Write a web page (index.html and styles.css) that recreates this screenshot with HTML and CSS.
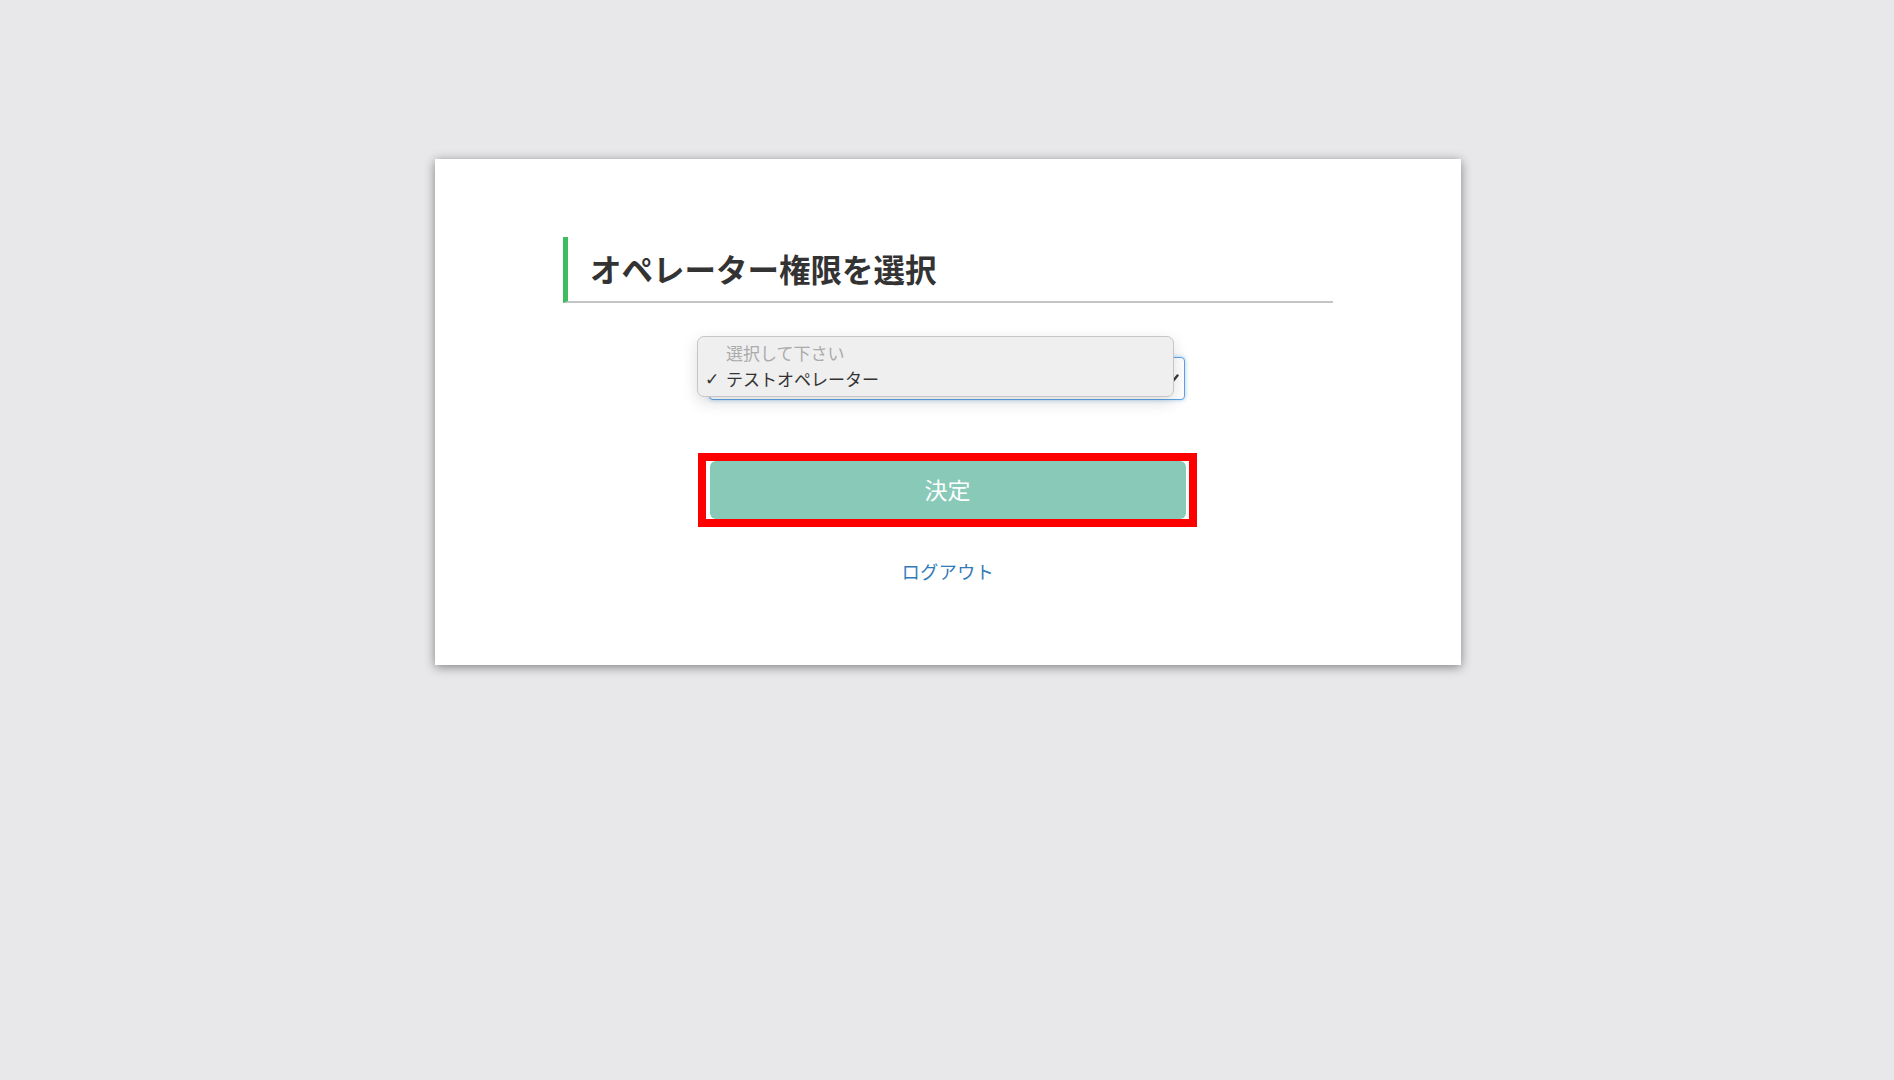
FILE: index.html
```html
<!DOCTYPE html>
<html lang="ja">
<head>
  <meta charset="UTF-8">
  <meta name="viewport" content="width=device-width, initial-scale=1.0">
  <title>オペレーター権限を選択</title>
  <link rel="stylesheet" href="styles.css">
</head>
<body>
  <div class="card">
    <h1 class="page-title">オペレーター権限を選択</h1>

    <div class="select-wrap">
      <div class="select-box">
        <span class="select-value">テストオペレーター</span>
        <svg class="select-arrow" width="12" height="9" viewBox="0 0 12 9">
          <path d="M1.5 1.5 L6 7 L10.5 1.5" fill="none" stroke="#3a3a3a" stroke-width="2.4" stroke-linecap="round" stroke-linejoin="round"/>
        </svg>
      </div>
      <!-- open native popup -->
      <ul class="select-menu">
        <li class="option placeholder"><span class="check"></span>選択して下さい</li>
        <li class="option selected"><span class="check">✓</span>テストオペレーター</li>
      </ul>
    </div>

    <div class="highlight">
      <button class="submit-btn" type="button">決定</button>
    </div>

    <a class="logout" href="#">ログアウト</a>
  </div>
</body>
</html>
```

FILE: styles.css
```css
* {
  box-sizing: border-box;
}

body {
  margin: 0;
  background-color: #e8e8ea;
  font-family: "Noto Sans CJK JP", "Noto Sans", sans-serif;
  color: #333;
  min-height: 100vh;
  padding: 159px 0 0 2px;
}

.card {
  width: 1026px;
  margin: 0 auto;
  background-color: #fff;
  padding: 78px 128px 82px;
  box-shadow: 0 2px 10px rgba(0, 0, 0, 0.45);
  display: flex;
  flex-direction: column;
  align-items: center;
}

.page-title {
  align-self: stretch;
  margin: 0;
  height: 66px;
  padding-left: 22px;
  border-left: 5px solid #3dbd5d;
  border-bottom: 2px solid #c4c4c4;
  font-size: 31.5px;
  font-weight: bold;
  line-height: 62px;
  color: #333;
}

/* select + open dropdown */
.select-wrap {
  position: relative;
  width: 476px;
  margin-top: 54px;
  margin-left: -2px;
}

.select-box {
  height: 43px;
  border: 1px solid #5ea2e4;
  border-radius: 4px;
  background: #fff;
  box-shadow: 0 0 4px rgba(94, 162, 228, 0.55);
  display: flex;
  align-items: center;
  justify-content: space-between;
  padding: 0 5px 0 16px;
  font-size: 17px;
}

.select-value {
  color: #333;
}

.select-menu {
  position: absolute;
  left: -12px;
  top: -21px;
  width: 477px;
  height: 61px;
  margin: 0;
  padding: 3px 0 6px;
  list-style: none;
  background: #efefef;
  border: 1px solid #c6c6c6;
  border-radius: 7px;
  box-shadow: 0 5px 16px rgba(0, 0, 0, 0.14);
}

.option {
  height: 26px;
  line-height: 26px;
  font-size: 17px;
  display: flex;
  align-items: center;
  color: #333;
}

.option.placeholder {
  color: #ababab;
}

.check {
  width: 28px;
  padding-left: 7px;
  font-family: "DejaVu Sans", sans-serif;
  font-size: 17px;
  color: #333;
}

/* red annotation box around the button */
.highlight {
  width: 499px;
  margin-top: 53px;
  margin-left: -2px;
  border: 8px solid #ff0000;
  padding: 0 3px 0 4px;
  background: #fff;
}

.submit-btn {
  display: block;
  width: 100%;
  height: 58px;
  border: none;
  border-radius: 6px;
  background-color: #89c9b8;
  color: #fff;
  font-family: "Noto Sans CJK JP", sans-serif;
  font-size: 23px;
  line-height: 56px;
  padding: 0 0 2px;
  cursor: pointer;
}

.logout {
  margin-top: 32px;
  font-size: 18px;
  line-height: 24px;
  color: #337ab7;
  text-decoration: none;
  letter-spacing: 0.5px;
}
```
